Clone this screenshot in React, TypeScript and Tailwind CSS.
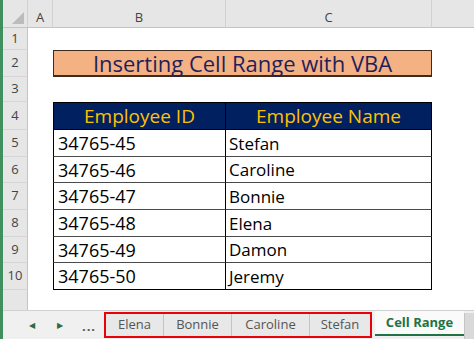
const employees = [
  ['34765-45', 'Stefan'],
  ['34765-46', 'Caroline'],
  ['34765-47', 'Bonnie'],
  ['34765-48', 'Elena'],
  ['34765-49', 'Damon'],
  ['34765-50', 'Jeremy'],
];

const hdr = 'bg-[#e6e6e6] border-b border-[#c4c4c4] border-r border-r-[#d2d2d2] flex items-center justify-center pt-2 text-[13px] text-[#444]';
const rowHdr = 'bg-[#e6e6e6] border-b border-[#d6d6d6] border-r border-r-[#c4c4c4] flex items-center justify-center text-[13px] text-[#444]';
const comic = "font-['Comic_Sans_MS','Open_Sans',sans-serif]";

function RowNum({ n }: { n: number }) {
  return <div className={rowHdr}>{n}</div>;
}

export default function App() {
  return (
    <div className="w-[474px] h-[339px] overflow-hidden flex bg-white font-['Open_Sans',sans-serif]">
      <div className="w-[3px] bg-[#3f8f5f] shrink-0" />
      <div className="flex-1 flex flex-col">
        <div className="grid grid-cols-[25px_25px_173px_206px_1fr] grid-rows-[28px_22px_27px_25px_28px_27px_26px_27px_27px_26px_27px_20px]">
          {/* column headers */}
          <div className="bg-[#e6e6e6] border-b border-[#c4c4c4] border-r border-r-[#d2d2d2] relative">
            <div className="absolute right-[3px] bottom-[3px] w-0 h-0 border-l-[12px] border-l-transparent border-b-[12px] border-b-[#bcbcbc]" />
          </div>
          <div className={hdr}>A</div>
          <div className={hdr}>B</div>
          <div className={hdr}>C</div>
          <div className="bg-[#e6e6e6] border-b border-[#c4c4c4]" />

          {/* row 1 */}
          <RowNum n={1} />
          <div /><div /><div /><div />

          {/* row 2 */}
          <RowNum n={2} />
          <div />
          <div className={`col-span-2 bg-[#f4b183] border border-[#3d2b1f] border-b-2 flex items-center justify-center text-[22px] leading-none text-[#1f1f5c] ${comic}`}>
            Inserting Cell Range with VBA
          </div>
          <div />

          {/* row 3 */}
          <RowNum n={3} />
          <div /><div /><div /><div />

          {/* row 4 - table header */}
          <RowNum n={4} />
          <div />
          <div className={`bg-[#002060] border border-black flex items-center justify-center text-[19px] text-[#ffc000] leading-none ${comic}`}>Employee ID</div>
          <div className={`bg-[#002060] border-t border-b border-r border-black flex items-center justify-center text-[19px] text-[#ffc000] leading-none ${comic}`}>Employee Name</div>
          <div />

          {employees.map(([id, name], i) => {
            const last = i === employees.length - 1;
            const bb = last ? 'border-b-black' : 'border-b-[#4a4a4a]';
            return [
              <RowNum key={`n${i}`} n={i + 5} />,
              <div key={`a${i}`} />,
              <div key={`b${i}`} className={`border-l border-r border-b border-black ${bb} flex items-center pl-[4px] text-[18px] text-black leading-none ${comic}`}>{id}</div>,
              <div key={`c${i}`} className={`border-r border-b border-black ${bb} flex items-center pl-[3px] text-[17px] text-black leading-none ${comic}`}>{name}</div>,
              <div key={`d${i}`} />,
            ];
          })}

          {/* row 11 partial */}
          <div className="bg-[#e6e6e6] border-r border-[#c4c4c4]" />
          <div /><div /><div /><div />
        </div>

        {/* sheet tabs */}
        <div className="h-[29px] flex items-stretch bg-[#f0f0f0] border-t border-[#d0d0d0] text-[13px] text-[#555]">
          <div className="w-[15px]" />
          <div className="w-[28px] flex items-center justify-center text-[8px] text-[#2d6b45]">◀</div>
          <div className="w-[28px] flex items-center justify-center text-[8px] text-[#2d6b45]">▶</div>
          <div className="w-[30px] flex items-center justify-center pt-[4px] font-bold text-[#555] tracking-[1px]">...</div>
          <div className="w-[268px] flex border-2 border-[#e8000b] mt-[1px] mb-[1px] bg-[#e8e8e8]">
            <div className="w-[57px] flex items-center justify-center">Elena</div>
            <div className="w-[68px] flex items-center justify-center border-l border-[#c4c4c4]">Bonnie</div>
            <div className="w-[78px] flex items-center justify-center border-l border-[#c4c4c4]">Caroline</div>
            <div className="w-[61px] flex items-center justify-center border-l border-[#c4c4c4]">Stefan</div>
          </div>
          <div className="w-[3px]" />
          <div className="w-[89px] flex items-center justify-center bg-[#fafafa] border-b-2 border-[#217346] mb-[3px] font-bold text-[#217346]">Cell Range</div>
          <div className="flex-1 bg-[#d9d9d9] border-l border-[#c4c4c4] mt-[2px]" />
        </div>
      </div>
    </div>
  );
}
